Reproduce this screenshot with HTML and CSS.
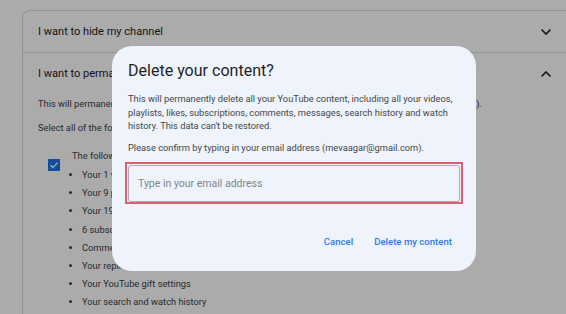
FILE: index.html
```html
<!DOCTYPE html>
<html>
<head>
<meta charset="utf-8">
<link rel="stylesheet" href="styles.css">
</head>
<body>
<div class="page">
  <div class="card">
    <div class="row">
      <span class="row-title">I want to hide my channel</span>
      <svg class="chev" width="12" height="8" viewBox="0 0 12 8"><path d="M1.5 1.5 L6 6 L10.5 1.5" fill="none" stroke="#202124" stroke-width="1.6"/></svg>
    </div>
    <div class="section">
      <div class="row">
        <span class="row-title">I want to permanently delete my content</span>
        <svg class="chev" width="12" height="8" viewBox="0 0 12 8"><path d="M1.5 6.5 L6 2 L10.5 6.5" fill="none" stroke="#202124" stroke-width="1.6"/></svg>
      </div>
      <p class="bg-text first">This will permanently delete the following content from your own YouTube channel (mevaagar@gmail.com).</p>
      <p class="bg-text">Select all of the following to confirm that you want to delete your content.</p>
      <div class="check-row">
        <span class="checkbox"><svg width="12" height="12" viewBox="0 0 12 12"><path d="M2.5 6.2 L5 8.6 L9.6 3.6" fill="none" stroke="#fff" stroke-width="1.4"/></svg></span>
        <div class="check-body">
          <div class="follow">The following will be permanently deleted:</div>
          <ul class="items">
            <li>Your 1 video</li>
            <li>Your 9 playlists</li>
            <li>Your 19 likes</li>
            <li>6 subscriptions</li>
            <li>Comments and messages</li>
            <li>Your replies and posts</li>
            <li>Your YouTube gift settings</li>
            <li>Your search and watch history</li>
          </ul>
        </div>
      </div>
    </div>
  </div>
</div>
<div class="scrim"></div>
<div class="dialog">
  <h2 class="d-title">Delete your content?</h2>
  <p class="d-text">This will permanently delete all your YouTube content, including all your videos, playlists, likes, subscriptions, comments, messages, search history and watch history. This data can't be restored.</p>
  <p class="d-text confirm">Please confirm by typing in your email address (mevaagar@gmail.com).</p>
  <div class="field">
    <div class="input">Type in your email address</div>
  </div>
  <div class="actions">
    <span class="btn">Cancel</span>
    <span class="btn">Delete my content</span>
  </div>
</div>
</body>
</html>
```
FILE: styles.css
```css
html, body {
  margin: 0;
  padding: 0;
  width: 566px;
  height: 314px;
  overflow: hidden;
  background: #fff;
  font-family: Roboto, "Liberation Sans", Arial, sans-serif;
  color: #202124;
}
.page {
  padding: 10px 0 0 22px;
}
.card {
  width: 544px;
  height: 304px;
  border: 1px solid #dadce0;
  border-right: none;
  border-bottom: none;
  border-radius: 8px 0 0 0;
  box-sizing: border-box;
  overflow: hidden;
}
.row {
  height: 41px;
  display: flex;
  align-items: center;
  justify-content: space-between;
  padding: 0 0 0 15px;
  width: 514px;
}
.row-title {
  font-size: 11.05px;
}
.chev {
  display: block;
}
.section {
  border-top: 1px solid #dadce0;
}
.bg-text {
  margin: 0;
  padding-left: 15px;
  font-size: 9.3px;
  line-height: 13px;
  color: #3c4043;
  white-space: nowrap;
}
.bg-text.first {
  margin-top: 3px;
}
.bg-text + .bg-text {
  margin-top: 11px;
}
.check-row {
  display: flex;
  padding-left: 25px;
  margin-top: 15px;
}
.checkbox {
  width: 12px;
  height: 12px;
  background: #1a73e8;
  border-radius: 1px;
  margin-top: 10px;
  margin-right: 12px;
  display: flex;
}
.check-body {
  font-size: 9.3px;
  color: #3c4043;
}
.follow {
  line-height: 13px;
}
.items {
  margin: 4px 0 0 0;
  padding-left: 10px;
  list-style: disc;
}
.items li {
  line-height: 18.2px;
}
.scrim {
  position: fixed;
  inset: 0;
  background: rgba(0, 0, 0, 0.33);
}
.dialog {
  position: absolute;
  left: 112px;
  top: 46px;
  width: 364px;
  height: 225px;
  box-sizing: border-box;
  background: #eef3fc;
  border-radius: 20px;
  padding: 13px 16px 0 16px;
  display: flex;
  flex-direction: column;
}
.d-title {
  margin: 0;
  font-weight: 400;
  font-size: 16.05px;
  line-height: 24px;
  color: #1f1f1f;
}
.d-text {
  margin: 9px 0 0 0;
  font-size: 9.3px;
  line-height: 13.5px;
  color: #444746;
}
.d-text.confirm {
  margin-top: 8px;
}
.field {
  margin: 8px 0 0 -3px;
  width: 338px;
  height: 42px;
  box-sizing: border-box;
  border: 2px solid #d9606c;
  padding: 1px 1px 0 1px;
}
.input {
  height: 37px;
  box-sizing: border-box;
  border: 1.5px solid #a9acb3;
  border-radius: 3px;
  font-size: 10.5px;
  color: #80868b;
  padding-left: 9px;
  display: flex;
  align-items: center;
}
.actions {
  display: flex;
  justify-content: flex-end;
  gap: 21px;
  margin-top: 31px;
  padding-right: 8px;
}
.btn {
  font-size: 9.6px;
  font-weight: 500;
  color: #2f7be6;
  line-height: 14px;
}
```
